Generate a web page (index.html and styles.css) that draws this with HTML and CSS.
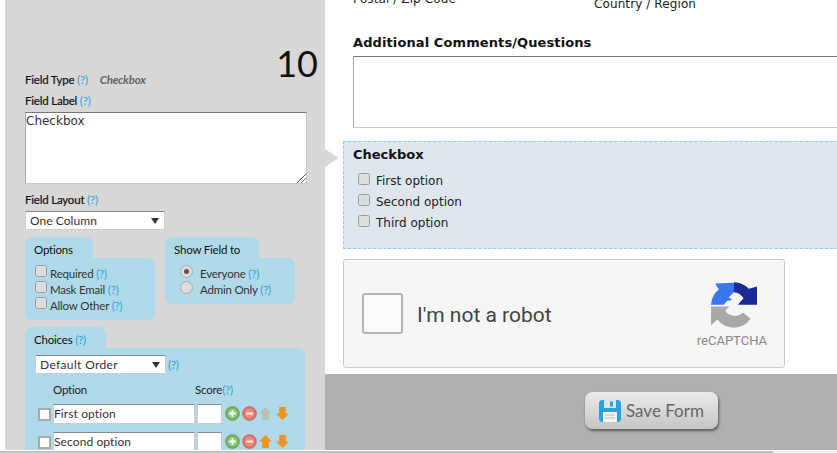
FILE: index.html
```html
<!DOCTYPE html>
<html lang="en">
<head>
<meta charset="utf-8">
<title>Form editor</title>
<link rel="stylesheet" href="styles.css">
</head>
<body>
<div class="page">
  <aside class="editor">
    <div class="field-number">10</div>
    <div class="row type-row"><b class="lbl">Field Type</b> <a class="help">(?)</a><em class="type-val">Checkbox</em></div>
    <div class="row label-row"><b class="lbl">Field Label</b> <a class="help">(?)</a></div>
    <div class="area label-area">Checkbox<svg class="grip" viewBox="0 0 9 9"><path d="M0 9 9 0M4 9 9 4" stroke="#555" fill="none"/></svg></div>
    <div class="row layout-row"><b class="lbl">Field Layout</b> <a class="help">(?)</a></div>
    <div class="select layout-select"><span>One Column</span><i class="caret"></i></div>
    <div class="groups">
      <section class="group g-options">
        <div class="tab">Options</div>
        <div class="body">
          <div class="chk-row"><span class="chk"></span>Required <a class="help">(?)</a></div>
          <div class="chk-row"><span class="chk"></span>Mask Email <a class="help">(?)</a></div>
          <div class="chk-row"><span class="chk"></span>Allow Other <a class="help">(?)</a></div>
        </div>
      </section>
      <section class="group g-show">
        <div class="tab">Show Field to</div>
        <div class="body">
          <div class="chk-row"><span class="rad on"></span>Everyone <a class="help">(?)</a></div>
          <div class="chk-row"><span class="rad"></span>Admin Only <a class="help">(?)</a></div>
        </div>
      </section>
    </div>
    <section class="group g-choices">
      <div class="tab">Choices <a class="help">(?)</a></div>
      <div class="body">
        <div class="order-row"><div class="select order-select"><span>Default Order</span><i class="caret"></i></div><a class="help">(?)</a></div>
        <div class="head-row"><span class="h-opt">Option</span><span>Score<a class="help">(?)</a></span></div>
        <div class="choice">
          <span class="box"></span><span class="inp txt">First option</span><span class="inp score"></span>
          <svg class="ic" viewBox="0 0 16 16"><circle cx="8" cy="8" r="7.4" fill="#6fae5c" stroke="#5b9a49" stroke-width=".6"/><circle cx="8" cy="8" r="5.4" fill="#8fcb76"/><path d="M8 4.5v7M4.5 8h7" stroke="#fff" stroke-width="2"/></svg>
          <svg class="ic" viewBox="0 0 16 16"><circle cx="8" cy="8" r="7.4" fill="#dd6f66" stroke="#c9594f" stroke-width=".6"/><circle cx="8" cy="8" r="5.4" fill="#ee8a7e"/><path d="M4.5 8h7" stroke="#fff" stroke-width="2"/></svg>
          <svg class="ic ar" viewBox="0 0 14 14"><path d="M7 0 14 7H10.5V14H3.5V7H0Z" fill="#b4c2b4"/></svg>
          <svg class="ic ar" viewBox="0 0 14 14"><path d="M7 14 14 7H10.5V0H3.5V7H0Z" fill="#ee9322"/></svg>
        </div>
        <div class="choice">
          <span class="box"></span><span class="inp txt">Second option</span><span class="inp score"></span>
          <svg class="ic" viewBox="0 0 16 16"><circle cx="8" cy="8" r="7.4" fill="#6fae5c" stroke="#5b9a49" stroke-width=".6"/><circle cx="8" cy="8" r="5.4" fill="#8fcb76"/><path d="M8 4.5v7M4.5 8h7" stroke="#fff" stroke-width="2"/></svg>
          <svg class="ic" viewBox="0 0 16 16"><circle cx="8" cy="8" r="7.4" fill="#dd6f66" stroke="#c9594f" stroke-width=".6"/><circle cx="8" cy="8" r="5.4" fill="#ee8a7e"/><path d="M4.5 8h7" stroke="#fff" stroke-width="2"/></svg>
          <svg class="ic ar" viewBox="0 0 14 14"><path d="M7 0 14 7H10.5V14H3.5V7H0Z" fill="#ee9322"/></svg>
          <svg class="ic ar" viewBox="0 0 14 14"><path d="M7 14 14 7H10.5V0H3.5V7H0Z" fill="#ee9322"/></svg>
        </div>
      </div>
    </section>
  </aside>
  <main class="preview">
    <div class="form">
      <div class="addr-row"><span class="addr-a">Postal / Zip Code</span><span class="addr-b">Country / Region</span></div>
      <h3 class="q-title">Additional Comments/Questions</h3>
      <div class="area comment-area"><svg class="grip" viewBox="0 0 9 9"><path d="M0 9 9 0M4 9 9 4" stroke="#555" fill="none"/></svg></div>
      <div class="active-field">
        <span class="pointer"></span>
        <h3 class="q-title">Checkbox</h3>
        <div class="opt"><span class="chk"></span>First option</div>
        <div class="opt"><span class="chk"></span>Second option</div>
        <div class="opt"><span class="chk"></span>Third option</div>
      </div>
      <div class="captcha">
        <span class="cap-box"></span>
        <span class="cap-text">I'm not a robot</span>
        <div class="cap-logo">
          <svg class="cap-icon" viewBox="0 0 130 128">
            <path d="M0 63A60 60 0 0 1 22 20L12 3 65 1V28L50 42 60 50 46 52 36 63Z" fill="#3a76ec"/>
            <path d="M65 0A60 60 0 0 1 107 18L130 12V63H76L92 45A36 36 0 0 0 65 28Z" fill="#1a2a96"/>
            <path d="M0 68H52L40 80A32 32 0 0 0 90 85L112 103A60 60 0 0 1 65 128 60 60 0 0 1 18 105L0 122Z" fill="#a9a9a9"/>
          </svg>
          <span class="cap-name">reCAPTCHA</span>
        </div>
      </div>
    </div>
    <div class="save-bar">
      <button class="save">
        <svg class="disk" viewBox="0 0 22 22"><rect width="22" height="22" rx="3.5" fill="#2aa3dc"/><rect x="5" y="0" width="12" height="8" fill="#d5e6ee"/><rect x="11" y="1.5" width="3" height="5" fill="#2aa3dc"/><rect x="4" y="12" width="14" height="10" fill="#f4f4f4"/><path d="M6 15h10M6 18h10" stroke="#bbb"/></svg>
        Save Form
      </button>
    </div>
  </main>
</div>
<div class="hscroll"><div class="hthumb"></div></div>
</body>
</html>
```
FILE: styles.css
```css
* { box-sizing: border-box; }
html, body { margin: 0; padding: 0; width: 837px; height: 453px; overflow: hidden; background: #fff; }
.page { display: flex; height: 450px; padding-left: 5px; }
.editor { width: 320px; flex: none; background: #d8d8d8; padding: 45px 18px 0 20px; font: 11.5px/16px Lato, sans-serif; letter-spacing: -.2px; color: #222; overflow: hidden; position: relative; }
.field-number { position: absolute; top: 42px; right: 7px; font: 36px/42px Lato, sans-serif; letter-spacing: 0; color: #111; }
.lbl { font-weight: 400; color: #111; -webkit-text-stroke: .2px #111; }
.help { color: #29a3dc; }
.row { height: 20px; line-height: 20px; }
.type-row { margin-top: 25px; }
.label-row { margin-top: 1px; }
.type-val { margin-left: 12px; color: #666; font-weight: 700; font-style: italic; }
.area { display: block; background: #fff; border: 1px solid #c9c9c9; border-top-color: #767676; border-left-color: #a9a9a9; position: relative; font: 12px/14px "DejaVu Sans", sans-serif; letter-spacing: 0; color: #333; }
.label-area { width: 282px; height: 72px; padding: 1px 0; margin-top: 1px; }
.grip { position: absolute; right: 0; bottom: 0; width: 9px; height: 9px; }
.layout-row { margin-top: 6px; }
.select { background: #fff; border: 1px solid #ccc; border-top-color: #888; display: flex; align-items: center; justify-content: space-between; font: 12px/16px Lato, sans-serif; letter-spacing: .05px; color: #333; padding: 0 4px; }
.layout-select { width: 140px; height: 19px; margin-top: 1px; }
.caret { width: 0; height: 0; border: 4px solid transparent; border-top: 6px solid #333; border-bottom: 0; margin-right: 1px; }
.groups { display: flex; gap: 10px; margin-top: 7px; align-items: flex-start; }
.tab { background: #b0dae9; border-radius: 7px 7px 0 0; height: 21px; padding: 5px 9px 0; line-height: 16px; width: fit-content; color: #111; }
.body { background: #b0dae9; border-radius: 0 7px 7px 7px; }
.g-options { width: 130px; }
.g-options .tab { width: 68px; }
.g-options .body { height: 62px; padding: 8px 10px 0; }
.g-show { width: 130px; }
.g-show .tab { width: 94px; }
.g-show .body { height: 46px; padding: 8px 15px 0; }
.chk-row { display: flex; align-items: center; height: 16px; white-space: pre; color: #333; }
.chk { width: 12px; height: 12px; border: 1px solid #9a9a9a; border-radius: 2.5px; background: #dcdcdc; flex: none; display: inline-block; box-shadow: inset 0 0 1px #fff; }
.g-options .chk { margin: -6px 3px 0 0; }
.rad { width: 13px; height: 13px; border-radius: 50%; border: 1px solid #aaa; background: #ddd; margin: -6px 7px 0 0; flex: none; position: relative; }
.rad.on::after { content: ""; position: absolute; left: 3px; top: 3px; width: 5px; height: 5px; border-radius: 50%; background: #555; }
.g-choices { margin-top: 7px; width: 280px; }
.g-choices .tab { width: 81px; }
.g-choices .body { height: 110px; padding: 7px 10px; }
.order-row { display: flex; gap: 2px; align-items: center; }
.order-select { width: 131px; height: 19px; letter-spacing: .35px; }
.head-row { display: flex; margin-top: 8px; height: 16px; color: #222; }
.h-opt { width: 142px; margin-left: 18px; }
.choice { display: flex; align-items: center; margin-top: 5px; height: 21px; }
.choice + .choice { margin-top: 7px; }
.box { width: 13px; height: 13px; background: #fff; border: 2px solid #aaa; margin: 1px 2px 0 3px; flex: none; }
.inp { background: #fff; border: 1px solid #ccc; border-top-color: #888; height: 20px; }
.txt { width: 142px; font: 12px/18px Lato, sans-serif; letter-spacing: .1px; color: #333; }
.score { width: 25px; margin-left: 2px; margin-right: 3px; }
.ic { width: 15px; height: 15px; margin-right: 2px; flex: none; }
.ic.ar { width: 13px; height: 13px; margin-right: 4px; }
.preview { flex: 1; display: flex; flex-direction: column; min-width: 0; background: #fff; }
.form { height: 374px; flex: none; overflow: hidden; padding-left: 28px; position: relative; }
.addr-row { height: 37px; margin-top: -9px; font: 12px/16px "DejaVu Sans", sans-serif; color: #222; display: flex; letter-spacing: .1px; }
.addr-row span:first-child { width: 241px; }
.addr-b { padding-top: 5px; }
.q-title { margin: 0; font: 700 13px/16px "DejaVu Sans", sans-serif; color: #111; }
.form > .q-title { margin-top: 7px; letter-spacing: .1px; }
.comment-area { margin-top: 5px; width: 520px; height: 72px; }
.active-field { position: relative; margin: 13px 0 0 -10px; height: 108px; width: 520px; background: #dde7ed; border: 1px dashed #90d2e2; border-right: 0; padding: 5px 0 0 9px; font: 12px/21px "DejaVu Sans", sans-serif; color: #222; }
.active-field .q-title { margin-bottom: 8px; }
.pointer { position: absolute; left: -19px; top: 7px; border: 9.5px solid transparent; border-left: 14px solid #d8d8d8; border-right: 0; width: 0; height: 0; }
.opt { display: flex; height: 21px; align-items: center; padding-left: 5px; }
.opt .chk { margin: -6px 6px 0 0; }
.captcha { margin: 10px 0 0 -10px; width: 442px; height: 109px; background: #f6f6f6; border: 1px solid #ccc; border-radius: 3px; display: flex; align-items: center; padding-left: 18px; position: relative; }
.cap-box { width: 41px; height: 41px; border: 2px solid #b5b5b5; border-radius: 3px; background: #fbfbfb; margin-right: 14px; flex: none; }
.cap-text { font: 21px/24px Roboto, sans-serif; color: #444; padding-top: 2px; }
.cap-logo { margin: 2px 17px 0 auto; display: flex; flex-direction: column; align-items: center; }
.cap-icon { width: 46px; height: 46px; margin: 1px 0 0 4px; }
.cap-name { font: 13px/16px Roboto, sans-serif; color: #888; margin-top: 5px; }
.save-bar { height: 76px; background: #b0b0b0; padding: 18px 0 0 260px; }
.save { width: 133px; height: 37px; border: 0; border-radius: 8px; background: linear-gradient(#ececec, #c4c5c8); box-shadow: 1px 2px 3px rgba(0,0,0,.5); display: flex; align-items: center; gap: 5px; padding: 0 0 0 14px; font: 17px/20px Lato, sans-serif; color: #666; }
.disk { width: 22px; height: 22px; }
.hscroll { height: 3px; background: #f1f1f1; border-top: 1px solid #fff; }
.hthumb { width: 773px; height: 2px; background: #c1c1c1; }
```
